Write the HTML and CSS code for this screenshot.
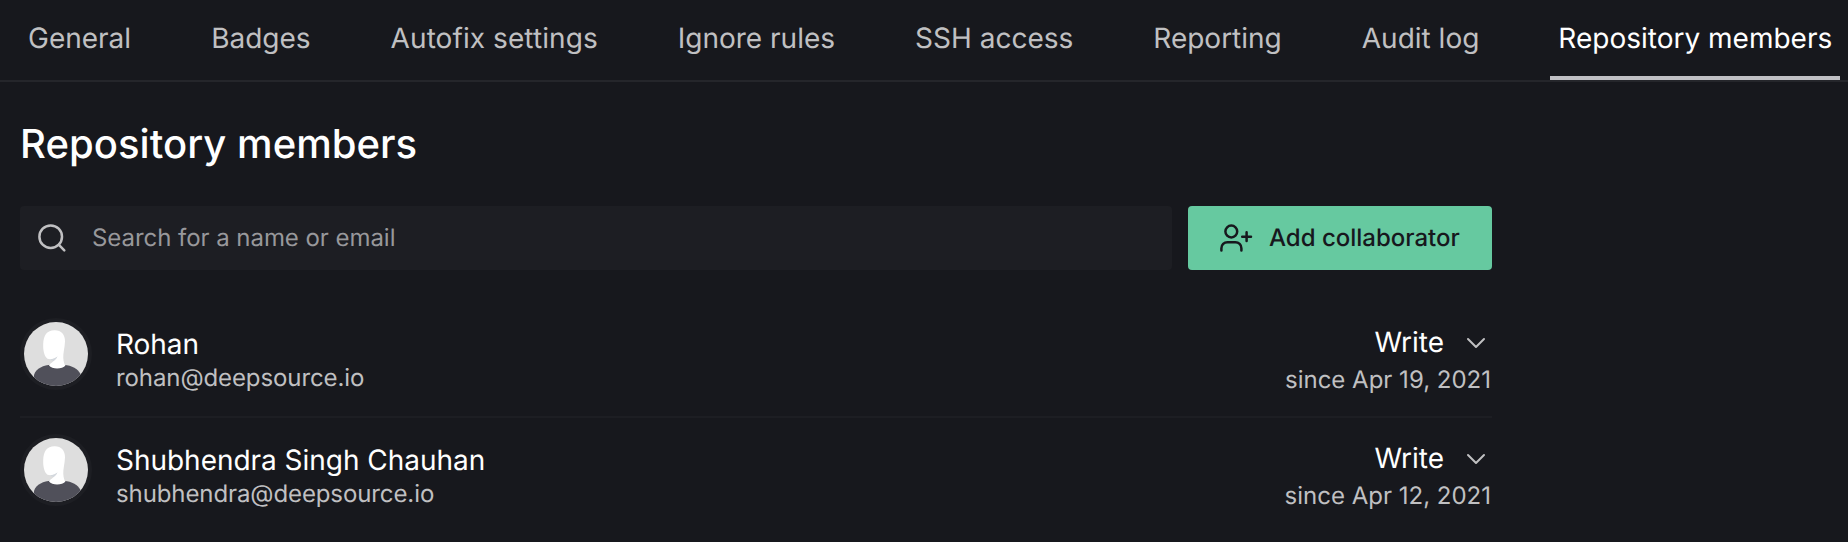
FILE: index.html
```html
<!DOCTYPE html>
<html lang="en">
<head>
<meta charset="utf-8">
<title>Repository members</title>
<link rel="stylesheet" href="styles.css">
</head>
<body>
<svg class="defs" aria-hidden="true">
  <symbol id="avatar" viewBox="0 0 64 64">
    <rect width="64" height="64" fill="#dedede"/>
    <path d="M10 64V53C12 46 20 43 27 42.700H40C48 43.500 54 47 56.500 52V64Z" fill="#50505a"/>
    <path d="M30.500 8.200C37 8 41.300 12.500 41 19.500C40.800 26 39 31 39.300 36C39.500 40 40.500 42.500 41.500 43.500C38.500 47.300 28 47.500 25 43.500C26.500 40.500 31 39.500 33.500 34.500C30.500 37 27 37.800 23.500 36.800C20 34 19 28 19.200 22C19.500 13 23 8.400 30.500 8.200Z" fill="#fff"/>
    <path d="M26 37.400Q30.500 37 33.500 34.600Q32 37.500 29.500 39Z" fill="#d3d8de"/>
  </symbol>
</svg>
<nav class="tabs">
  <a class="tab">General</a>
  <a class="tab">Badges</a>
  <a class="tab wide">Autofix settings</a>
  <a class="tab">Ignore rules</a>
  <a class="tab">SSH access</a>
  <a class="tab">Reporting</a>
  <a class="tab">Audit log</a>
  <a class="tab active">Repository members</a>
</nav>
<main class="content">
  <h1 class="title">Repository members</h1>
  <div class="toolbar">
    <div class="search">
      <svg class="search-icon" viewBox="0 0 32 32" fill="none" stroke="currentColor" stroke-width="2.500" stroke-linecap="round"><circle cx="14.700" cy="14.700" r="11.300"/><path d="M22.900 22.900L28.300 28.300"/></svg>
      <span class="placeholder">Search for a name or email</span>
    </div>
    <button class="add">
      <svg class="add-icon" viewBox="0 0 36 32" fill="none" stroke="currentColor" stroke-width="2.500" stroke-linecap="round" stroke-linejoin="round"><circle cx="13.300" cy="9.500" r="5.900"/><path d="M3.400 28.400V26.200A6 6 0 0 1 9.400 20.200H17.400A6 6 0 0 1 23.400 26.200V28.400"/><path d="M28.600 10.300V19.100M24.200 14.700H33"/></svg>
      <span>Add collaborator</span>
    </button>
  </div>
  <ul class="members">
    <li class="member">
      <svg class="avatar"><use href="#avatar"/></svg>
      <div class="who"><div class="name">Rohan</div><div class="email">rohan@deepsource.io</div></div>
      <div class="access">
        <div class="role">Write<svg class="chevron" viewBox="0 0 20 12"><path d="M2 2L10 10L18 2"/></svg></div>
        <div class="since">since Apr 19, 2021</div>
      </div>
    </li>
    <li class="member">
      <svg class="avatar"><use href="#avatar"/></svg>
      <div class="who"><div class="name">Shubhendra Singh Chauhan</div><div class="email">shubhendra@deepsource.io</div></div>
      <div class="access">
        <div class="role">Write<svg class="chevron" viewBox="0 0 20 12"><path d="M2 2L10 10L18 2"/></svg></div>
        <div class="since">since Apr 12, 2021</div>
      </div>
    </li>
  </ul>
</main>
</body>
</html>
```
FILE: styles.css
```css
* { box-sizing: border-box; }
body {
  margin: 0;
  height: 542px;
  overflow: hidden;
  background: #17181d;
  color: #fff;
  font-family: Inter, sans-serif;
  text-rendering: geometricPrecision;
}
.defs { display: none; }
.tabs {
  display: flex;
  gap: 64px;
  height: 82px;
  padding-left: 20px;
  border-bottom: 2px solid #25262b;
}
.tab {
  height: 80px;
  padding: 18px 8px 0;
  border-bottom: 4px solid transparent;
  color: #c0c0c2;
  font-size: 28px;
  line-height: 40px;
  white-space: nowrap;
}
.tab.wide { letter-spacing: 0.08px; }
.tab.active { margin-left: -1px; color: #fff; border-color: #c0c0c4; }
.content { width: 1472px; margin-left: 20px; }
.title {
  margin: 0;
  padding-top: 34px;
  font-size: 40px;
  font-weight: 500;
  line-height: 56px;
  letter-spacing: 0.05px;
}
.toolbar { display: flex; gap: 16px; margin-top: 34px; }
.search {
  display: flex;
  align-items: center;
  gap: 24px;
  flex: 1;
  height: 64px;
  padding-left: 16px;
  border-radius: 4px;
  background: #1d1e23;
  color: #c0c0c2;
}
.search-icon { width: 32px; height: 32px; }
.placeholder {
  color: #98989b;
  font-size: 24px;
  line-height: 32px;
  letter-spacing: -0.05px;
}
.add {
  display: flex;
  align-items: center;
  gap: 15px;
  width: 304px;
  height: 64px;
  padding: 0 0 0 30px;
  border: 0;
  border-radius: 4px;
  background: #66c9a0;
  color: #17181d;
  font: 500 24px/32px Inter, sans-serif;
  text-rendering: geometricPrecision;
  white-space: nowrap;
}
.add-icon { width: 36px; height: 32px; }
.members { margin: 32px 0 0; padding: 0; list-style: none; }
.member {
  display: flex;
  height: 116px;
  padding-top: 16px;
  border-bottom: 2px solid #1d1e23;
}
.member:last-child { border-bottom: 0; }
.avatar {
  width: 72px;
  height: 72px;
  border: 4px solid #1d1e23;
  border-radius: 50%;
}
.who { flex: 1; padding: 8px 0 0 24px; }
.name { font-size: 28px; line-height: 36px; letter-spacing: -0.03px; }
.email {
  color: #c0c0c2;
  font-size: 24px;
  line-height: 32px;
  letter-spacing: -0.1px;
}
.access { padding-top: 4px; text-align: right; }
.role {
  display: flex;
  justify-content: flex-end;
  align-items: center;
  gap: 22px;
  padding-right: 6px;
  font-size: 28px;
  line-height: 40px;
}
.chevron {
  width: 20px;
  height: 12px;
  margin-top: 2px;
  fill: none;
  stroke: #c0c0c2;
  stroke-width: 2;
  stroke-linecap: round;
  stroke-linejoin: round;
}
.since {
  padding-right: 1px;
  color: #c0c0c2;
  font-size: 24px;
  line-height: 36px;
}
```
